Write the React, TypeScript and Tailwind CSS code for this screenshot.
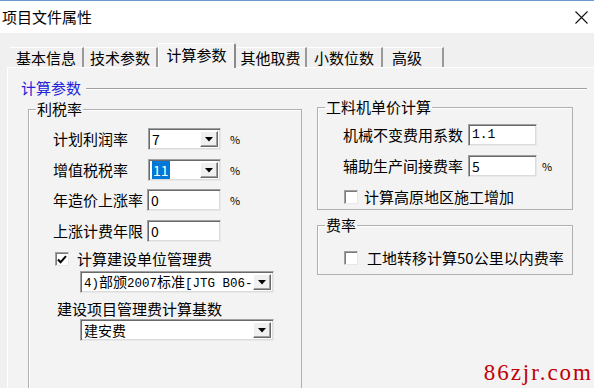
import { ReactNode } from 'react';

const sunken =
    'border border-t-[#a0a0a0] border-l-[#a0a0a0] border-r-[#e8e8e8] border-b-[#e8e8e8] shadow-[inset_1px_1px_0_#6a6a6a,inset_-1px_-1px_0_#dcdcdc] bg-white';

function Arrow() {
    return (
        <svg width="8" height="5" viewBox="0 0 8 5">
            <path d="M0 0 H8 L4 4.5 Z" fill="#000" />
        </svg>
    );
}

function Combo({ value, w, selected, clip }: { value: ReactNode; w: string; selected?: boolean; clip?: boolean }) {
    return (
        <div className={`${w} h-[22px] ${sunken} flex items-stretch px-[2px] py-[1px]`}>
            <div className={`flex-1 flex items-center whitespace-nowrap pl-[1px] text-[14px] leading-[18px] ${clip ? 'overflow-hidden' : ''}`}>
                {selected ? <span className="bg-[#0078d7] text-white px-[1px]">{value}</span> : <span>{value}</span>}
            </div>
            <div className="w-[18px] my-[1px] bg-[#f0f0f0] border border-t-white border-l-white border-r-[#696969] border-b-[#696969] shadow-[inset_-1px_-1px_0_#a0a0a0] flex items-center justify-center">
                <Arrow />
            </div>
        </div>
    );
}

function Field({ value, w, mono }: { value: string; w: string; mono?: boolean }) {
    return (
        <div
            className={`${w} h-[22px] ${sunken} flex items-center pl-[3px] leading-[18px] ${mono ? "text-[13px] font-['Liberation_Mono',monospace]" : 'text-[14px]'}`}
        >
            {value}
        </div>
    );
}

function Check({ checked }: { checked?: boolean }) {
    return (
        <div className="w-[14px] h-[14px] bg-white border border-t-[#a0a0a0] border-l-[#a0a0a0] border-r-[#e8e8e8] border-b-[#e8e8e8] shadow-[inset_1px_1px_0_#7a7a7a] flex items-center justify-center">
            {checked && (
                <svg width="10" height="9" viewBox="0 0 10 9">
                    <path d="M1 4.5 L3.6 7.2 L9 1.2" stroke="#000" strokeWidth="2" fill="none" />
                </svg>
            )}
        </div>
    );
}

function Group({ title, className, children }: { title: string; className?: string; children: ReactNode }) {
    return (
        <fieldset className={`border border-[#b0b0b0] shadow-[inset_1px_1px_0_#fff] ${className ?? ''}`}>
            <legend className="ml-[7px] px-[1px] text-[15px] leading-[20px]">{title}</legend>
            {children}
        </fieldset>
    );
}

const Pct = ({ cls }: { cls: string }) => <span className={`${cls} text-[11px] leading-[14px]`}>%</span>;

const Mono = ({ children }: { children: ReactNode }) => (
    <span className="font-['Liberation_Mono',monospace] text-[12.5px]">{children}</span>
);

export default function App() {
    const tabs = [
        { t: '基本信息', w: 'w-[74px]' },
        { t: '技术参数', w: 'w-[74px]' },
        { t: '计算参数', w: 'w-[78px]', on: true },
        { t: '其他取费', w: 'w-[71px]' },
        { t: '小数位数', w: 'w-[76px]' },
        { t: '高级', w: 'w-[61px] justify-start pl-[9px]' },
    ];

    return (
        <div className="relative w-[594px] h-[388px] overflow-hidden bg-[#f0f0f0] flex flex-col text-black font-['Noto_Sans_CJK_SC',sans-serif]">
            {/* 标题栏 */}
            <div className="h-[33px] shrink-0 bg-white border-t border-[#6b9bd1] flex items-center justify-between pl-[2px] pr-[6px]">
                <span className="text-[15px] leading-[20px]">项目文件属性</span>
                <svg width="13" height="13" viewBox="0 0 13 13">
                    <path d="M0.5 0.5 L12.5 12.5 M12.5 0.5 L0.5 12.5" stroke="#111" strokeWidth="1.1" />
                </svg>
            </div>

            {/* 选项卡 */}
            <div className="h-[24px] mt-[10px] shrink-0 flex items-end pl-[10px]">
                {tabs.map((tab) =>
                    tab.on ? (
                        <div
                            key={tab.t}
                            className={`${tab.w} h-[25px] -mb-px relative z-10 bg-[#f3f3f3] border-t border-l border-white border-r-2 border-r-[#8a8a8a] rounded-t-[2px] flex items-center justify-center text-[15px] leading-[20px] pb-[2px]`}
                        >
                            {tab.t}
                        </div>
                    ) : (
                        <div
                            key={tab.t}
                            className={`${tab.w} h-[20px] flex items-center justify-center border-t border-white border-r-2 border-r-[#9a9a9a] text-[15px] leading-[20px]`}
                        >
                            {tab.t}
                        </div>
                    )
                )}
            </div>

            {/* 面板 */}
            <div className="flex-1 ml-[7px] bg-[#f3f3f3] border-t border-l border-white flex flex-col">
                <div className="flex items-center pt-[10px] pl-[13px] pr-[7px] h-[30px]">
                    <span className="text-[15px] leading-[20px] text-[#2424d8]">计算参数</span>
                    <div className="flex-1 ml-[5px] mt-[2px] border-t border-[#a0a0a0] border-b border-b-white" />
                </div>

                <div className="flex items-start">
                    {/* 利税率 */}
                    <Group title="利税率" className="ml-[20px] w-[274px] h-[300px] mt-[1px]">
                        <div className="pt-[9px] pl-[24px] flex flex-col text-[15px] leading-[20px]">
                            <div className="flex items-center h-[22px]">
                                <span className="w-[95px]">计划利润率</span>
                                <Combo value="7" w="w-[73px]" />
                                <Pct cls="ml-[9px]" />
                            </div>
                            <div className="flex items-center h-[22px] mt-[9px]">
                                <span className="w-[95px]">增值税税率</span>
                                <Combo value="11" w="w-[73px]" selected />
                                <Pct cls="ml-[9px]" />
                            </div>
                            <div className="flex items-center h-[22px] mt-[8px]">
                                <span className="w-[94px]">年造价上涨率</span>
                                <Field value="0" w="w-[74px]" />
                                <Pct cls="ml-[9px]" />
                            </div>
                            <div className="flex items-center h-[22px] mt-[9px]">
                                <span className="w-[94px]">上涨计费年限</span>
                                <Field value="0" w="w-[74px]" />
                            </div>
                            <div className="flex items-center h-[22px] mt-[6px] pl-[2px]">
                                <Check checked />
                                <span className="ml-[8px]">计算建设单位管理费</span>
                            </div>
                            <div className="mt-[1px] ml-[27px]">
                                <Combo
                                    clip
                                    w="w-[194px]"
                                    value={
                                        <>
                                            <Mono>4)</Mono>部颁<Mono>2007</Mono>标准<Mono>[JTG B06-</Mono>
                                        </>
                                    }
                                />
                            </div>
                            <div className="h-[20px] mt-[6px] pl-[4px]">建设项目管理费计算基数</div>
                            <div className="mt-[0px] ml-[27px]">
                                <Combo value="建安费" w="w-[194px]" />
                            </div>
                        </div>
                    </Group>

                    {/* 右列 */}
                    <div className="ml-[15px] w-[256px] flex flex-col -mt-[1px]">
                        <Group title="工料机单价计算" className="h-[113px]">
                            <div className="pt-[7px] pl-[25px] flex flex-col text-[15px] leading-[20px]">
                                <div className="flex items-center h-[22px]">
                                    <span className="w-[125px]">机械不变费用系数</span>
                                    <Field value="1.1" w="w-[69px]" mono />
                                </div>
                                <div className="flex items-center h-[22px] mt-[9px]">
                                    <span className="w-[125px]">辅助生产间接费率</span>
                                    <Field value="5" w="w-[69px]" />
                                    <Pct cls="ml-[5px]" />
                                </div>
                                <div className="flex items-center h-[22px] mt-[9px] pl-[1px]">
                                    <Check />
                                    <span className="ml-[6px]">计算高原地区施工增加</span>
                                </div>
                            </div>
                        </Group>
                        <Group title="费率" className="mt-[5px] h-[60px]">
                            <div className="pt-[12px] pl-[26px] flex items-center h-[22px] box-content text-[15px] leading-[20px]">
                                <Check />
                                <span className="ml-[9px]">工地转移计算50公里以内费率</span>
                            </div>
                        </Group>
                    </div>
                </div>
            </div>

            {/* 水印 */}
            <span className="absolute right-[1px] bottom-[3px] text-[23px] leading-[24px] tracking-[2px] text-[#c00000] font-['Liberation_Serif',serif]">
                86zjr.com
            </span>
        </div>
    );
}
